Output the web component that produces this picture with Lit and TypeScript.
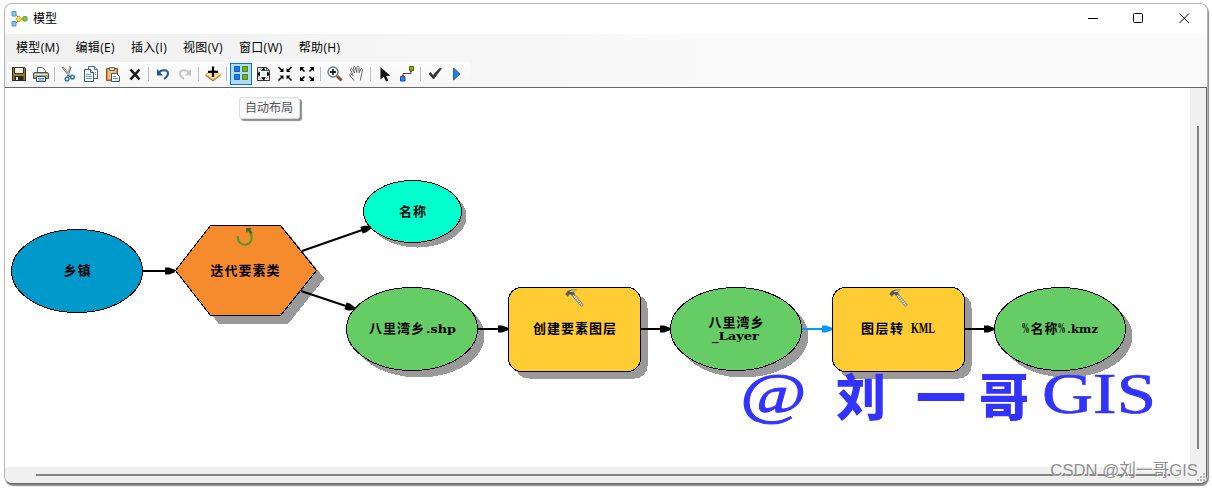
import { LitElement, html, svg, css, nothing, type SVGTemplateResult } from 'lit';
import { customElement, property } from 'lit/decorators.js';
import { classMap } from 'lit/directives/class-map.js';

type Run = { text: string; x: number; y: number; width: number; latin?: boolean; narrow?: boolean };

type ModelNode = {
  kind: 'ellipse' | 'tool' | 'iterator';
  x: number;
  y: number;
  width: number;
  height: number;
  fill: string;
  shadow: number;
  label: Run[];
};

type Link = { from: [number, number]; to: [number, number]; active?: boolean };

const MENUS = ['模型(M)', '编辑(E)', '插入(I)', '视图(V)', '窗口(W)', '帮助(H)'];

const TOOLS = [
  'save', 'print', '|',
  'cut', 'copy', 'paste', 'delete', '|',
  'undo', 'redo', '|',
  'add', '|',
  'layout', 'extent', 'shrink', 'grow', '|',
  'zoom', 'pan', '|',
  'select', 'connect', '|',
  'validate', 'run',
];

// all icons share a 22x22 box
const ICONS: Record<string, SVGTemplateResult> = {
  save: svg`
    <path d="M4.500 4.500h12l1 1v12h-13z" fill="#8f7d3c" stroke="#2b2512"/>
    <path d="M6.500 4.500h9v6h-9z" fill="#f7f4e6" stroke="#3c3417"/>
    <path d="M6.500 13h9v5h-9z" fill="#2c2718"/>
    <path d="M8 14h2v3H8z" fill="#fff"/>`,
  print: svg`
    <path d="M7.500 9V4.500h5l3 3V9" fill="#fff" stroke="#5c656e"/>
    <path d="M4.500 9.500h13l1 1.500v4.500h-15V11z" fill="#a7a99b" stroke="#4b4f48"/>
    <path d="M4.500 11.500h13" stroke="#e7e7dc"/>
    <path d="M6.500 13.500h9v5h-9z" fill="#fff" stroke="#35506e"/>
    <path d="M8 15.500h6M8 17h6" stroke="#4c92cf"/>
    <path d="M16 12h2v1h-2z" fill="#a5c21d"/>`,
  cut: svg`
    <path d="M4.500 4l7.500 9.500M12.500 3.500l-3 10" stroke="#666" stroke-width="2" fill="none"/>
    <path d="M5 4.500l6.500 8M12 4l-2.500 8" stroke="#ddd" stroke-width=".8" fill="none"/>
    <circle cx="9" cy="16" r="1.800" fill="#fff" stroke="#2d78ae" stroke-width="1.500"/>
    <circle cx="14.500" cy="14" r="1.800" fill="#fff" stroke="#2d78ae" stroke-width="1.500"/>`,
  copy: svg`
    <path d="M8.500 3.500h6l3 3v9h-9z" fill="#fff" stroke="#496f91"/>
    <path d="M14.500 3.500v3h3" fill="#cfe2f1" stroke="#496f91"/>
    <path d="M4.500 6.500h6l3 3v9h-9z" fill="#fff" stroke="#345b7e"/>
    <path d="M10.500 6.500v3h3" fill="#cfe2f1" stroke="#345b7e"/>
    <path d="M6 11.500h5M6 13.500h6M6 15.500h6M15 9.500h1M15 11.500h1" stroke="#55a0df"/>`,
  paste: svg`
    <path d="M4.500 5.500h11v12h-11z" fill="#d88e3a" stroke="#8d571c"/>
    <path d="M6 7h8v9H6z" fill="#f5c17a"/>
    <path d="M7.500 4.500h5v3h-5z" fill="#ddd" stroke="#666"/>
    <path d="M9.500 10.500h5l3 3v5h-8z" fill="#fff" stroke="#365778"/>
    <path d="M11 13.500h3M11 15.500h5" stroke="#4b9cdf"/>`,
  delete: svg`<path d="M6.500 6.500l9 10M15.500 6.500l-9 10" stroke="#161616" stroke-width="2.600"/>`,
  undo: svg`
    <path d="M7 9.500c2-3 9-3.500 9 1 0 2.200-1.500 3.800-4 5.500" fill="none" stroke="#1d5796" stroke-width="2"/>
    <path d="M5 6v6.500h6z" fill="#1d5796"/>`,
  redo: svg`
    <path d="M15 9.500c-2-3-9-3.500-9 1 0 2.200 1.500 3.800 4 5.500" fill="none" stroke="#c6c6c6" stroke-width="2"/>
    <path d="M17 6v6.500h-6z" fill="#c6c6c6"/>`,
  add: svg`
    <path d="M11 7.500l8 5-8 6-8-6z" fill="#a77a35"/>
    <path d="M11 6.500l7.500 5-7.500 5.500-7.500-5.500z" fill="#ffe0a0" stroke="#c99a50" stroke-width=".8"/>
    <path d="M11 3.500v10.500M6 8.800h10" stroke="#000" stroke-width="2.200"/>`,
  layout: svg`
    <path d="M4.500 3.500h5v5h-5zM4.500 11.500h5v5h-5z" fill="#1c7bec" stroke="#0a5cc4"/>
    <path d="M12.500 3.500h5v5h-5zM12.500 11.500h5v5h-5z" fill="#71b51b" stroke="#4f870f"/>`,
  extent: svg`
    <path d="M5.500 4.500h9l3 3v10h-12z" fill="#fff" stroke="#333"/>
    <path d="M14.500 4.500v3h3" stroke="#333"/>
    <circle cx="11.500" cy="11" r="5.500" stroke="#666" stroke-dasharray="2 1.500"/>
    <path d="M11.500 4.800l2.500 3H9zM11.500 17.300l2.500-3H9zM5 11l3-2.500v5zM18 11l-3-2.500v5z" fill="#000"/>
    <path d="M9.500 9h4v4h-4z" fill="#dceeee"/>`,
  shrink: svg`
    <path d="M4.500 4l4 4M17.500 4l-4 4M4.500 17.500l4-4M17.500 17.500l-4-4" stroke="#000" stroke-width="1.600"/>
    <path d="M9.500 5v4h-4zM12.500 5v4h4zM9.500 16.500v-4h-4zM12.500 16.500v-4h4z" fill="#000"/>`,
  grow: svg`
    <path d="M5 5l3.500 3.500M17 5l-3.500 3.500M5 17l3.500-3.500M17 17l-3.500-3.500" stroke="#000" stroke-width="1.600"/>
    <path d="M4 4h4.500L4 8.500zM18 4h-4.500L18 8.500zM4 18h4.500L4 13.500zM18 18h-4.500l4.500-4.500z" fill="#000"/>`,
  zoom: svg`
    <path d="M13 13l4.500 4.500" stroke="#88503a" stroke-width="3"/>
    <circle cx="9" cy="9" r="5" fill="#f7fbff" stroke="#6b7580" stroke-width="1.300"/>
    <path d="M9 6v6M6 9h6" stroke="#222" stroke-width="1.800"/>`,
  pan: svg`
    <path d="M8 17.500c-1-2-4-4-4.300-6.300 1-1 2 0 3.400 1.500L4.500 6.500c.3-1.500 1.600-1 2 0L8.500 10 7.300 4.500c.3-1.500 1.700-1 2 0l1.500 5 .2-5.500c.4-1 1.700-1 2 .3l.2 5.500 1.600-3.800c.8-1 1.900-.3 1.700.8-.6 3-1.200 4.700-1.500 7-.1 1.500-.7 2.700-.8 3.700" fill="#fff" stroke="#555" stroke-width=".9"/>`,
  select: svg`<path d="M6.500 4v12.500l3.200-2.700 2.300 4.700 2.300-1-2.200-4.500 4.200-.3z" fill="#111"/>`,
  connect: svg`
    <path d="M7 12.500v-2h8v-2" stroke="#444"/>
    <path d="M13.500 3.500h4v4h-4z" fill="#7aba17" stroke="#40700c"/>
    <path d="M4.500 13.500h4.500v4.500H4.500z" fill="#2085f4" stroke="#0758b5"/>
    <path d="M6 12h2v2H6zM14 7h2v2h-2z" fill="#e12b16"/>`,
  validate: svg`<path d="M5 11l1.500-1.500 2.500 3 6.500-7h2L9.500 16z" fill="#333" stroke="#333" stroke-width=".8"/>`,
  run: svg`<path d="M7.500 5v12l6.500-6z" fill="#2583df" stroke="#155fa9"/>`,
};

const GREEN = '#66cc66';
const AMBER = '#ffcc33';

const NODES: ModelNode[] = [
  { kind: 'ellipse', x: 11.5, y: 229.5, width: 131, height: 83, fill: '#0099cc', shadow: 0,
    label: [{ text: '乡镇', x: 63.5, y: 275, width: 27 }] },
  { kind: 'iterator', x: 175.5, y: 225.5, width: 141, height: 90, fill: '#f68b2e', shadow: 8,
    label: [{ text: '迭代要素类', x: 210.5, y: 275, width: 69 }] },
  { kind: 'ellipse', x: 363.5, y: 180.5, width: 98, height: 62, fill: '#00ffcc', shadow: 5,
    label: [{ text: '名称', x: 399, y: 216, width: 27 }] },
  { kind: 'ellipse', x: 346.5, y: 287.5, width: 131, height: 83, fill: GREEN, shadow: 7,
    label: [
      { text: '八里湾乡', x: 369, y: 333, width: 55 },
      { text: '.shp', x: 426, y: 333, width: 30, latin: true },
    ] },
  { kind: 'tool', x: 508.5, y: 287.5, width: 132, height: 84, fill: AMBER, shadow: 7,
    label: [{ text: '创建要素图层', x: 533, y: 333, width: 83 }] },
  { kind: 'ellipse', x: 670.5, y: 287.5, width: 131, height: 83, fill: GREEN, shadow: 7,
    label: [
      { text: '八里湾乡', x: 708.5, y: 327, width: 55 },
      { text: '_Layer', x: 712, y: 340, width: 47, latin: true },
    ] },
  { kind: 'tool', x: 832.5, y: 287.5, width: 132, height: 84, fill: AMBER, shadow: 7,
    label: [
      { text: '图层转', x: 861, y: 333, width: 42 },
      { text: 'KML', x: 911, y: 333, width: 24, latin: true, narrow: true },
    ] },
  { kind: 'ellipse', x: 994.5, y: 287.5, width: 131, height: 83, fill: GREEN, shadow: 7,
    label: [
      { text: '%', x: 1021.5, y: 333, width: 8, latin: true, narrow: true },
      { text: '名称', x: 1030.5, y: 333, width: 27 },
      { text: '%', x: 1057.5, y: 333, width: 8, latin: true, narrow: true },
      { text: '.kmz', x: 1067, y: 333, width: 31, latin: true },
    ] },
];

const LINKS: Link[] = [
  { from: [143, 271], to: [175, 271] },
  { from: [302, 251], to: [371, 227] },
  { from: [301, 291], to: [355, 309] },
  { from: [478, 329], to: [508, 329] },
  { from: [641, 329], to: [670, 329] },
  { from: [802, 329], to: [832, 329], active: true },
  { from: [965, 329], to: [994, 329] },
];

@customElement('model-toolbar')
export class ModelToolbar extends LitElement {
  @property() active = '';

  static styles = css`
    :host {
      display: flex;
      width: 463px;
      height: 25px;
      padding: 1px 0 0 1px;
      box-sizing: border-box;
      border-radius: 3px;
      background: linear-gradient(#fdfdfd, #f5f5f5);
    }
    .tool {
      width: 22px;
      height: 22px;
      flex: none;
    }
    .active {
      background: #b5d8f3;
      outline: 1px solid #0078d7;
      outline-offset: -1px;
    }
    .sep {
      width: 1px;
      height: 14px;
      margin: 4px 3px 0 2px;
      background: #bdbdbd;
    }
    svg {
      display: block;
    }
  `;

  render() {
    return TOOLS.map(name => name === '|'
      ? html`<span class="sep"></span>`
      : html`<span class=${classMap({ tool: true, active: name === this.active })}>
          <svg width="22" height="22" viewBox="0 0 22 22" fill="none">${ICONS[name]}</svg>
        </span>`
    );
  }
}

@customElement('model-canvas')
export class ModelCanvas extends LitElement {
  static styles = css`
    :host {
      display: block;
      background: #fff;
      overflow: hidden;
    }
    svg {
      display: block;
    }
    .shape {
      stroke: #000;
      shape-rendering: crispEdges;
    }
    .shadow {
      fill: #999;
      shape-rendering: crispEdges;
    }
    .label {
      font: bold 13px 'Noto Sans CJK SC', sans-serif;
    }
    .latin {
      font: bold 11.5px 'DejaVu Serif', serif;
    }
    .narrow {
      font: bold 15px 'Liberation Serif', serif;
    }
    .link {
      stroke: #000;
      stroke-width: 2;
    }
    .head {
      fill: #000;
    }
    .link.on {
      stroke: #0099ff;
    }
    .head.on {
      fill: #0099ff;
    }
    .mark {
      fill: #3333ff;
    }
    .mark-at {
      font: italic 58px 'Liberation Serif', serif;
      stroke: #3333ff;
      stroke-width: 1;
    }
    .mark-name {
      font: 900 50px 'Noto Sans CJK SC', sans-serif;
    }
    .mark-gis {
      font: 57px 'Liberation Serif', serif;
      stroke: #3333ff;
      stroke-width: .7;
    }
  `;

  outline({ kind, x, y, width: w, height: h }: ModelNode, cls: string, fill: string, d = 0) {
    if (kind === 'ellipse') {
      return svg`<ellipse class=${cls} fill=${fill} cx=${x + w / 2 + d} cy=${y + h / 2 + d} rx=${w / 2} ry=${h / 2}/>`;
    }
    if (kind === 'tool') {
      return svg`<rect class=${cls} fill=${fill} x=${x + d} y=${y + d} width=${w} height=${h} rx="13"/>`;
    }
    const pts = [[0, h / 2], [35, 0], [w - 36, 0], [w, h / 2], [w - 36, h], [35, h]];
    return svg`<polygon class=${cls} fill=${fill} points=${pts.map(([a, b]) => `${x + a + d},${y + b + d}`).join(' ')}/>`;
  }

  glyph({ kind, x, y }: ModelNode) {
    if (kind === 'tool') {
      return svg`<g transform="translate(${x + 56} ${y + 1})">
        <path d="M8.500 6l9.500 11.500" stroke="#77736a" stroke-width="3.400"/>
        <path d="M8.500 6l9.500 11.500" stroke="#f0ece2" stroke-width="2" stroke-dasharray="1.500 .6"/>
        <path d="M.8 5.500l2.400-3L7 1l5.500.2-3 2.300.8 2-2.800 1.800L6 5.800 4.500 6.200 3.500 8.500z" fill="#595959"/>
        <path d="M5 3.500l2-1.500 5-.3-3 1.500z" fill="#e5e5e5"/>
      </g>`;
    }
    if (kind === 'iterator') {
      return svg`
        <path d="M238 236a7 7 0 1 0 12-3" fill="none" stroke="#4e9a26" stroke-width="1.900"/>
        <path d="M246 228h5.500l-1 2 2 3-2 1-2.500-3-1.500 2z" fill="#307016"/>`;
    }
    return nothing;
  }

  link({ from, to, active }: Link) {
    const [dx, dy] = [to[0] - from[0], to[1] - from[1]];
    const angle = Math.atan2(dy, dx) * 180 / Math.PI;
    const len = Math.hypot(dx, dy);
    return svg`<g transform="translate(${from[0]} ${from[1]}) rotate(${angle})">
      <path class=${classMap({ link: true, on: !!active })} d="M0 0H${len - 4}"/>
      <path class=${classMap({ head: true, on: !!active })} d="M${len - 10} -3.500h4L${len} -1.200v2.400l-6 2.300h-4z"/>
    </g>`;
  }

  node(n: ModelNode) {
    return svg`
      ${n.shadow ? this.outline(n, 'shadow', '#999', n.shadow) : nothing}
      ${this.outline(n, 'shape', n.fill)}
      ${this.glyph(n)}
      ${n.label.map(r => svg`<text class=${classMap({ label: !r.latin, latin: !!r.latin, narrow: !!r.narrow })}
        x=${r.x} y=${r.y} textLength=${r.width}
        lengthAdjust=${r.latin ? 'spacingAndGlyphs' : 'spacing'}>${r.text}</text>`)}
    `;
  }

  render() {
    return html`<svg width="1185" height="379" viewBox="5 88 1185 379">
      ${NODES.map(n => this.node(n))}
      ${LINKS.map(l => this.link(l))}
      <text class="mark mark-at" x="740" y="413" textLength="66" lengthAdjust="spacingAndGlyphs">@</text>
      <text class="mark mark-name" x="836 916 979" y="416">刘一哥</text>
      <text class="mark mark-gis" x="1042" y="413" textLength="114" lengthAdjust="spacingAndGlyphs">GIS</text>
    </svg>`;
  }
}

@customElement('app-root')
export class AppRoot extends LitElement {
  static styles = css`
    :host {
      display: block;
      box-sizing: border-box;
      width: 1212px;
      height: 489px;
      padding: 3px 4px 5px;
      background: #fff;
      overflow: hidden;
      font: 12px 'Open Sans', 'Noto Sans CJK SC', sans-serif;
      color: #000;
    }
    .window {
      position: relative;
      display: flex;
      flex-direction: column;
      box-sizing: border-box;
      width: 1204px;
      height: 481px;
      border: 1px solid #b4b4b4;
      border-bottom-color: #666;
      border-radius: 8px;
      box-shadow: 1px 2px 1px #888;
      background: #f0f0f0;
      overflow: hidden;
    }
    .titlebar {
      display: flex;
      align-items: center;
      flex: none;
      height: 30px;
      padding-left: 6px;
      background: #fff;
    }
    .logo {
      margin-right: 5px;
    }
    .title {
      flex: 1;
      line-height: 16px;
    }
    .controls {
      margin: 0 17px 2px 0;
    }
    .chrome {
      flex: none;
      height: 53px;
      background: linear-gradient(90deg, #f0f0f0, #fafafa 60%);
    }
    .menubar {
      display: flex;
      gap: 16px;
      height: 28px;
      line-height: 27px;
      padding-left: 11px;
      letter-spacing: .33px;
    }
    .toolbar {
      margin-left: 2px;
    }
    .body {
      flex: 1;
      display: grid;
      grid-template: 379px 1fr / 1185px 1fr;
      border: solid #666;
      border-width: 1px 1px 0 0;
      background: #f0f0f0;
    }
    .vbar {
      padding: 38px 0 0 7px;
    }
    .vthumb {
      width: 2px;
      height: 323px;
      background: #858585;
    }
    .hbar {
      padding: 7px 0 0 31px;
    }
    .hthumb {
      width: 1134px;
      height: 2px;
      background: #858585;
    }
    .tooltip {
      position: absolute;
      left: 234px;
      top: 93px;
      box-sizing: border-box;
      width: 61px;
      height: 22px;
      border: 1px solid #dcdcdc;
      border-radius: 3px;
      background: #f9f9f9;
      box-shadow: 2px 2px 1px #8c8c8c;
      color: #575757;
      line-height: 20px;
      text-indent: 5px;
    }
    .credit {
      position: absolute;
      right: 9px;
      bottom: 1px;
      font: 16.7px/22px 'Liberation Sans', 'Noto Sans CJK SC', sans-serif;
      color: #8f8f8f;
      text-shadow: 1px 1px 0 #fff;
      white-space: nowrap;
    }
    .grip {
      position: absolute;
      right: 2px;
      bottom: 2px;
    }
    svg {
      display: block;
    }
  `;

  render() {
    return html`<div class="window">
      <div class="titlebar">
        <svg class="logo" width="17" height="16" viewBox="0 0 17 16">
          <path d="M4 3l5 5-5 5M9 8h5" fill="none" stroke="#777"/>
          <path d="M1 .5h4v4.500H1zM1 10.500h4V15H1z" fill="#83c5f5" stroke="#4f9bd2"/>
          <path d="M8 4.800L11.200 8 8 11.200 4.800 8z" fill="#ffd83a" stroke="#c79a16"/>
          <rect x="12" y="5.500" width="4" height="4.500" rx="1.200" fill="#86c940" stroke="#579a22"/>
        </svg>
        <span class="title">模型</span>
        <svg class="controls" width="102" height="12" viewBox="0 0 102 12" fill="none" stroke="#000">
          <path d="M0 6.500h10"/>
          <rect x="45.500" y="1.500" width="9" height="9" rx="1"/>
          <path d="M91.500 1.500l9.500 9.500M101 1.500L91.500 11"/>
        </svg>
      </div>
      <div class="chrome">
        <div class="menubar">${MENUS.map(m => html`<span>${m}</span>`)}</div>
        <model-toolbar class="toolbar" active="layout"></model-toolbar>
      </div>
      <div class="body">
        <model-canvas></model-canvas>
        <div class="vbar"><div class="vthumb"></div></div>
        <div class="hbar"><div class="hthumb"></div></div>
      </div>
      <div class="tooltip">自动布局</div>
      <svg class="grip" width="8" height="8" viewBox="0 0 8 8" fill="#b5b5b5">
        <path d="M6 0h2v2H6zM3 3h2v2H3zM6 3h2v2H6zM0 6h2v2H0zM3 6h2v2H3zM6 6h2v2H6z"/>
      </svg>
      <div class="credit">CSDN @刘一哥GIS</div>
    </div>`;
  }
}
